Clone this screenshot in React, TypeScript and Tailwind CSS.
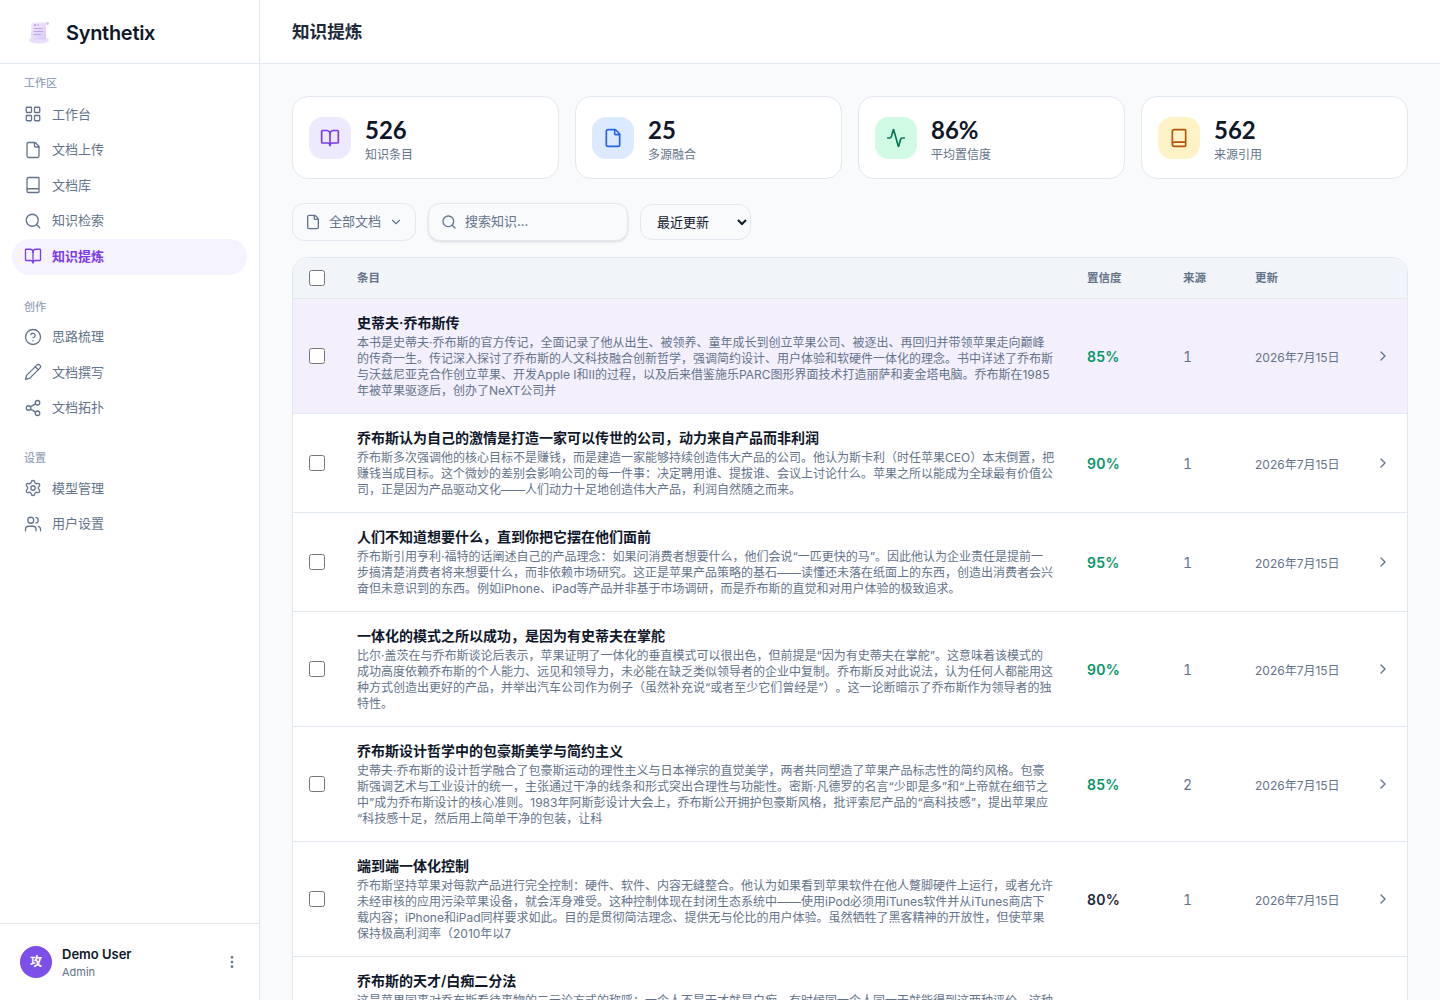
import React from "react";
import {
  Activity, Book, BookOpen, ChevronDown, ChevronRight, CircleHelp, EllipsisVertical, File,
  LayoutGrid, Pencil, Search, Settings, Share2, Users,
} from "lucide-react";

const groups = [
  { label: "工作区", items: [
    { icon: LayoutGrid, text: "工作台" },
    { icon: File, text: "文档上传" },
    { icon: Book, text: "文档库" },
    { icon: Search, text: "知识检索" },
    { icon: BookOpen, text: "知识提炼", active: true },
  ]},
  { label: "创作", items: [
    { icon: CircleHelp, text: "思路梳理" },
    { icon: Pencil, text: "文档撰写" },
    { icon: Share2, text: "文档拓扑" },
  ]},
  { label: "设置", items: [
    { icon: Settings, text: "模型管理" },
    { icon: Users, text: "用户设置" },
  ]},
];

const stats = [
  { icon: BookOpen, value: "526", label: "知识条目", tile: "bg-[#ede9fe]", color: "text-[#7c3aed]" },
  { icon: File, value: "25", label: "多源融合", tile: "bg-[#dbeafe]", color: "text-[#2563eb]" },
  { icon: Activity, value: "86%", label: "平均置信度", tile: "bg-[#d1fae5]", color: "text-[#047857]" },
  { icon: Book, value: "562", label: "来源引用", tile: "bg-[#fef3c7]", color: "text-[#b45309]" },
];

const rows = [
  { title: "史蒂夫·乔布斯传", desc: "本书是史蒂夫·乔布斯的官方传记，全面记录了他从出生、被领养、童年成长到创立苹果公司、被逐出、再回归并带领苹果走向巅峰的传奇一生。传记深入探讨了乔布斯的人文科技融合创新哲学，强调简约设计、用户体验和软硬件一体化的理念。书中详述了乔布斯与沃兹尼亚克合作创立苹果、开发Apple I和II的过程，以及后来借鉴施乐PARC图形界面技术打造丽萨和麦金塔电脑。乔布斯在1985年被苹果驱逐后，创办了NeXT公司并", conf: "85%", src: "1", good: true, active: true },
  { title: "乔布斯认为自己的激情是打造一家可以传世的公司，动力来自产品而非利润", desc: "乔布斯多次强调他的核心目标不是赚钱，而是建造一家能够持续创造伟大产品的公司。他认为斯卡利（时任苹果CEO）本末倒置，把赚钱当成目标。这个微妙的差别会影响公司的每一件事：决定聘用谁、提拔谁、会议上讨论什么。苹果之所以能成为全球最有价值公司，正是因为产品驱动文化——人们动力十足地创造伟大产品，利润自然随之而来。", conf: "90%", src: "1", good: true },
  { title: "人们不知道想要什么，直到你把它摆在他们面前", desc: "乔布斯引用亨利·福特的话阐述自己的产品理念：如果问消费者想要什么，他们会说“一匹更快的马”。因此他认为企业责任是提前一步搞清楚消费者将来想要什么，而非依赖市场研究。这正是苹果产品策略的基石——读懂还未落在纸面上的东西，创造出消费者会兴奋但未意识到的东西。例如iPhone、iPad等产品并非基于市场调研，而是乔布斯的直觉和对用户体验的极致追求。", conf: "95%", src: "1", good: true },
  { title: "一体化的模式之所以成功，是因为有史蒂夫在掌舵", desc: "比尔·盖茨在与乔布斯谈论后表示，苹果证明了一体化的垂直模式可以很出色，但前提是“因为有史蒂夫在掌舵”。这意味着该模式的成功高度依赖乔布斯的个人能力、远见和领导力，未必能在缺乏类似领导者的企业中复制。乔布斯反对此说法，认为任何人都能用这种方式创造出更好的产品，并举出汽车公司作为例子（虽然补充说“或者至少它们曾经是”）。这一论断暗示了乔布斯作为领导者的独特性。", conf: "90%", src: "1", good: true },
  { title: "乔布斯设计哲学中的包豪斯美学与简约主义", desc: "史蒂夫·乔布斯的设计哲学融合了包豪斯运动的理性主义与日本禅宗的直觉美学，两者共同塑造了苹果产品标志性的简约风格。包豪斯强调艺术与工业设计的统一，主张通过干净的线条和形式突出合理性与功能性。密斯·凡德罗的名言“少即是多”和“上帝就在细节之中”成为乔布斯设计的核心准则。1983年阿斯彭设计大会上，乔布斯公开拥护包豪斯风格，批评索尼产品的“高科技感”，提出苹果应\u200b“科技感十足，然后用上简单干净的包装，让科", conf: "85%", src: "2", good: true },
  { title: "端到端一体化控制", desc: "乔布斯坚持苹果对每款产品进行完全控制：硬件、软件、内容无缝整合。他认为如果看到苹果软件在他人蹩脚硬件上运行，或者允许未经审核的应用污染苹果设备，就会浑身难受。这种控制体现在封闭生态系统中——使用iPod必须用iTunes软件并从iTunes商店下载内容；iPhone和iPad同样要求如此。目的是贯彻简洁理念、提供无与伦比的用户体验。虽然牺牲了黑客精神的开放性，但使苹果保持极高利润率（2010年以7", conf: "80%", src: "1", good: false },
  { title: "乔布斯的天才/白痴二分法", desc: "这是苹果同事对乔布斯看待事物的二元论方式的称呼：一个人不是天才就是白痴，有时候同一个人同一天就能得到这两种评价。这种思维方式深刻影响了他对员工、产品和合作伙伴的判断，也塑造了苹果内部高压而追求卓越的文化氛围。同事们逐渐学会在他的极端评价之间保持冷静，并用事实和作品来证明自己的观点，这种二元判断虽然伤人，却也迫使团队不断提高标准。许多人后来回忆说，正是这种近乎苛刻的要求，让他们做出了自己从未想过能够完成的作品。", conf: "85%", src: "1", good: true },
];

const cols = "grid grid-cols-[48px_730px_96px_72px_128px_40px] items-center";

function Logo() {
  return (
    <svg width="26" height="26" viewBox="0 0 26 26" className="shrink-0">
      <defs>
        <linearGradient id="lg" x1="0" y1="0" x2="1" y2="1">
          <stop offset="0" stopColor="#f3ecfd" />
          <stop offset="1" stopColor="#d9c8f7" />
        </linearGradient>
      </defs>
      <ellipse cx="13" cy="21" rx="10" ry="3.5" fill="#e9defb" />
      <path d="M5 5.5c0-1.2.9-2 2-2h11c1.2 0 2 .8 2 2v13c0 1.2-.8 2-2 2H8c-1.6 0-3-1.3-3-3z" fill="url(#lg)" />
      <path d="M8 9.5h8M8 12.5h9M8 15.5h7" stroke="#bfa6ec" strokeWidth="1.1" strokeLinecap="round" />
      <path d="M8 7 9 5l1 2M12 5v2" stroke="#b199e6" strokeWidth=".9" fill="none" />
      <circle cx="21.5" cy="4.5" r="1.4" fill="#d3c0f4" />
    </svg>
  );
}

export default function App() {
  return (
    <div className="flex h-screen w-full overflow-hidden bg-[#f8fafc] font-['Inter','Noto_Sans_CJK_SC',sans-serif] text-[#0f172a]">
      <aside className="flex w-[260px] shrink-0 flex-col border-r border-[#e2e8f0] bg-white">
        <div className="flex h-16 shrink-0 items-center gap-[14px] border-b border-[#e2e8f0] pl-[26px]">
          <Logo />
          <span className="pt-[2px] text-[20px] font-semibold tracking-[-0.015em]">Synthetix</span>
        </div>
        <nav className="flex-1 px-3 pt-[11px]">
          {groups.map((g, i) => (
            <div key={g.label} className={i ? "mt-6" : ""}>
              <div className={`${i ? "mb-[5px]" : "mb-[6px]"} px-3 text-[11px] leading-4 font-medium text-[#94a3b8]`}>{g.label}</div>
              {g.items.map((it) => {
                const Icon = it.icon;
                return (
                  <div
                    key={it.text}
                    className={
                      it.active
                        ? "flex h-[35.5px] items-center gap-[10px] rounded-[18px] bg-[#f5f3ff] px-3 pb-[1px] text-[13px] font-semibold text-[#7c3aed]"
                        : "flex h-[35.5px] items-center gap-[10px] px-3 pb-[1px] text-[13px] text-[#64748b]"
                    }
                  >
                    <Icon size={18} strokeWidth={1.75} />
                    <span>{it.text}</span>
                  </div>
                );
              })}
            </div>
          ))}
        </nav>
        <div className="flex h-[77px] shrink-0 items-center gap-[10px] border-t border-[#e2e8f0] pr-[19px] pl-5">
          <div className="flex h-8 w-8 shrink-0 items-center justify-center rounded-full bg-[#7c4fe8] font-['Liberation_Serif','Noto_Sans_CJK_SC',serif] text-[12px] font-semibold text-white">攻</div>
          <div className="-mt-[1px] min-w-0 flex-1">
            <div className="text-[13px] leading-[20px] font-semibold">Demo User</div>
            <div className="text-[11px] leading-[16px] text-[#64748b]">Admin</div>
          </div>
          <EllipsisVertical size={16} className="text-[#64748b]" />
        </div>
      </aside>

      <main className="flex min-w-0 flex-1 flex-col overflow-hidden">
        <header className="flex h-16 shrink-0 items-center border-b border-[#e2e8f0] bg-white px-8">
          <h1 className="pt-[2px] text-[17.6px] font-bold text-[#1e293b]">知识提炼</h1>
        </header>
        <div className="min-h-0 flex-1 overflow-hidden px-8 pt-8">
          <div className="grid grid-cols-4 gap-4">
            {stats.map((s) => {
              const Icon = s.icon;
              return (
                <div key={s.label} className="flex h-[83px] items-center gap-[14px] rounded-2xl border border-[#e2e8f0] bg-white px-4">
                  <div className={`flex h-[42px] w-[42px] items-center justify-center rounded-[14px] ${s.tile} ${s.color}`}>
                    <Icon size={20} strokeWidth={2} />
                  </div>
                  <div className="pt-[4px]">
                    <div className="font-['Lato',sans-serif] text-[24px] leading-[30px] font-bold">{s.value}</div>
                    <div className="mt-[1px] text-[12px] leading-[18px] text-[#64748b]">{s.label}</div>
                  </div>
                </div>
              );
            })}
          </div>

          <div className="mt-6 flex items-center gap-3">
            <div className="flex h-[38px] w-[124px] items-center gap-2 rounded-xl border border-[#e2e8f0] bg-[#f8fafc] pl-3 text-[13px] text-[#64748b]">
              <File size={16} />
              <span>全部文档</span>
              <ChevronDown size={14} />
            </div>
            <div className="flex h-[38px] w-[200px] items-center gap-2 rounded-xl border border-[#e2e8f0] bg-[#f8fafc] pl-3 text-[13px] text-[#64748b] shadow-sm">
              <Search size={16} />
              <span>搜索知识...</span>
            </div>
            <select className="h-9 w-[111px] rounded-xl border border-[#e2e8f0] bg-[#f8fafc] px-3 text-[13px] text-[#0f172a]">
              <option>最近更新</option>
            </select>
          </div>

          <div className="mt-4 rounded-2xl border border-[#e2e8f0] bg-white">
            <div className={`${cols} h-[41px] rounded-t-2xl border-b border-[#e2e8f0] bg-[#f1f5f9] text-[11.5px] font-semibold text-[#64748b]`}>
              <div className="pl-4 leading-none"><input type="checkbox" className="h-4 w-4 align-middle" /></div>
              <div className="px-4 pt-[2px]">条目</div>
              <div className="px-4 pt-[2px]">置信度</div>
              <div className="px-4 pt-[2px]">来源</div>
              <div className="px-4 pt-[2px]">更新</div>
              <div />
            </div>
            {rows.map((r) => (
              <div key={r.title} className={`${cols} border-b border-[#e2e8f0] ${r.active ? "bg-[#f3effd]" : ""}`}>
                <div className="mb-[2px] pl-4 leading-none"><input type="checkbox" className="h-4 w-4 align-middle" /></div>
                <div className="px-4 pt-4 pb-[14px]">
                  <div className="mb-[4px] text-[14px] leading-4 font-semibold text-[#0f172a]">{r.title}</div>
                  <div className="line-clamp-4 text-[12px] leading-4 text-[#64748b] [text-spacing-trim:space-all]">{r.desc}</div>
                </div>
                <div className={`px-4 text-[14px] font-semibold tracking-[0.02em] ${r.good ? "text-[#059669]" : "text-[#1e293b]"}`}>{r.conf}</div>
                <div className="px-4 text-[14px] text-[#64748b] tabular-nums">{r.src}</div>
                <div className="px-4 pt-[4px] text-[12px] whitespace-nowrap text-[#64748b]">2026年7月15日</div>
                <div className="flex pl-2"><ChevronRight size={16} className="text-[#64748b]" /></div>
              </div>
            ))}
          </div>
        </div>
      </main>
    </div>
  );
}
